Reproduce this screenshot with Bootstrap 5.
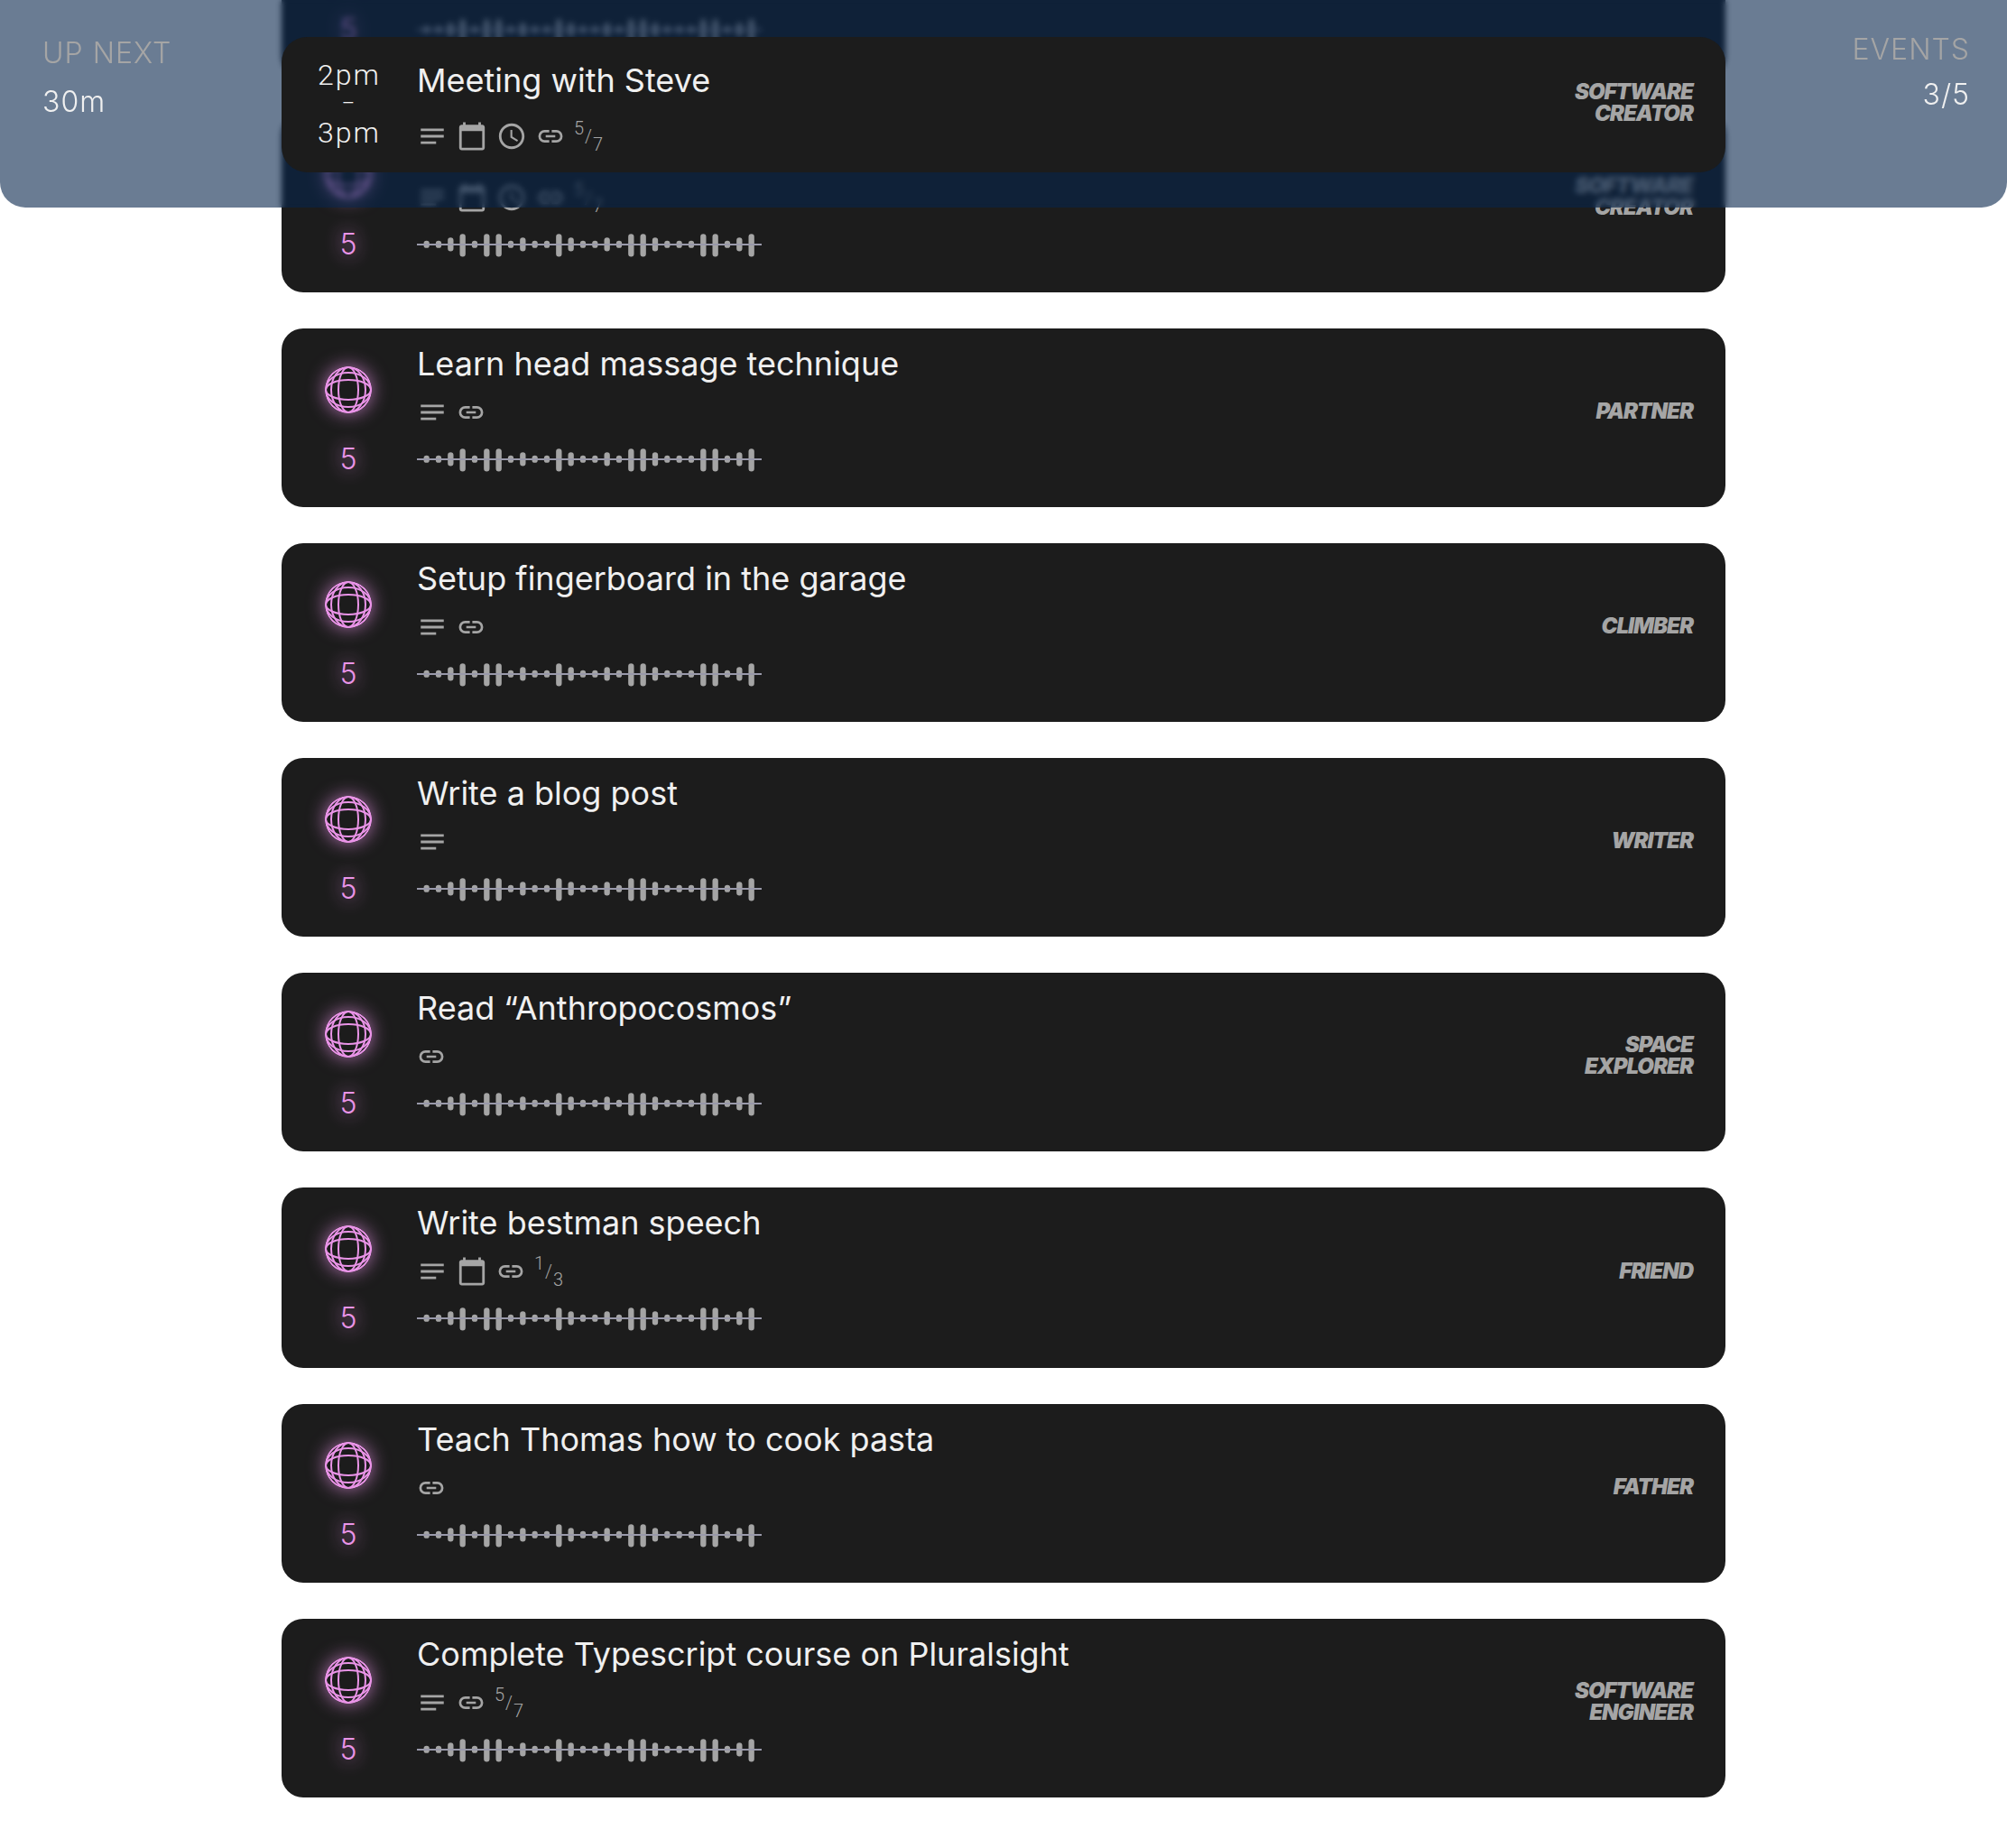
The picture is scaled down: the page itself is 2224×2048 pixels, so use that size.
<!DOCTYPE html>
<html lang="en">
<head>
<meta charset="utf-8">
<meta name="viewport" content="width=device-width, initial-scale=1">
<title>Tasks</title>
<link rel="stylesheet" href="https://cdn.jsdelivr.net/npm/bootstrap@5.3.0/dist/css/bootstrap.min.css">
<style>
body{font-family:Inter,"Liberation Sans",sans-serif;background:#fff;color:#f0f0f0;overflow-x:hidden}
.topbar{background:rgba(7,36,75,.6);-webkit-backdrop-filter:blur(3px);backdrop-filter:blur(3px);border-radius:0 0 28px 28px;padding:41px 0 39px;display:grid;grid-template-columns:minmax(0,1fr) minmax(0,1600px) minmax(0,1fr)}
.side-note{font-size:32px;font-weight:300;letter-spacing:1px;white-space:nowrap}
.side-note dt{font-weight:300;color:#a5a5a5}
.side-note dd{margin:0}
.next-note{padding-left:47px;line-height:54px;margin-top:-9px}
.events-note{padding-right:41px;line-height:50px;margin-top:-11px}
.tile{background:#1c1c1c;border:0;border-radius:24px;color:#f0f0f0;padding:17px 36px 32px 30px;min-height:198px}
.tile-tall{min-height:200px}
.tile-event{border-radius:28px;padding-top:26px;padding-bottom:23px;min-height:0}
.tile-event .marks{margin-top:23px}
.task-list{max-width:1600px;margin-top:-112px;padding-bottom:56px;gap:40px}
.lead-col{width:88px;flex:none}
.tile-title{font-size:36px;line-height:44px;min-height:44px;font-weight:400;margin:0}
.tile-tag{font-size:24px;line-height:24px;font-weight:900;font-style:italic;letter-spacing:-1px;color:#a5a5a5;text-transform:uppercase;width:160px}
.clock-text{font-family:Roboto,"Liberation Sans",sans-serif;font-size:32px;line-height:32px;font-weight:300;letter-spacing:2px;padding-left:2px}
.clock-text .dash{font-size:22px}
.marks{height:34px;gap:10px;color:#a5a5a5}
.marks svg{width:34px;height:34px;flex:none}
.marks .ico-link{width:32px}
.level{color:#ea94e8;font-size:32px;line-height:40px;font-weight:300;text-shadow:0 0 20px #ea94e8}
.globe{width:52px;height:52px;border-radius:50%;box-shadow:0 0 20px rgba(234,148,232,.7);color:#ea94e8}
.ratio-text{font-family:Roboto,"Liberation Sans",sans-serif;font-size:20px;line-height:16px;height:34px;font-weight:300;gap:1px}
.wave{width:382px;height:28px}
.task-list .globe{margin-top:25px}
.task-list .level{margin-top:31px}
.task-list .marks{margin:15px 0 21px}
</style>
<script src="https://cdn.jsdelivr.net/npm/bootstrap@5.3.0/dist/js/bootstrap.bundle.min.js"></script>
</head>
<body>
<svg width="0" height="0" class="position-absolute" aria-hidden="true">
<symbol id="notes" viewBox="0 0 24 24"><path fill="currentColor" d="M3 18h12v-2H3v2zM3 6v2h18V6H3zm0 7h18v-2H3v2z"/></symbol>
<symbol id="calendar" viewBox="0 0 24 24"><path fill="currentColor" d="M20 3h-1V1h-2v2H7V1H5v2H4c-1.100 0-2 .9-2 2v16c0 1.100.9 2 2 2h16c1.100 0 2-.9 2-2V5c0-1.100-.9-2-2-2zm0 18H4V8h16v13z"/></symbol>
<symbol id="clock" viewBox="0 0 24 24"><path fill="currentColor" d="M11.990 2C6.470 2 2 6.480 2 12s4.470 10 9.990 10C17.520 22 22 17.520 22 12S17.520 2 11.990 2zM12 20c-4.420 0-8-3.580-8-8s3.580-8 8-8 8 3.580 8 8-3.580 8-8 8zm.5-13H11v6l5.250 3.150.75-1.230-4.500-2.670z"/></symbol>
<symbol id="link" viewBox="0 0 32 34"><path fill="none" stroke="currentColor" stroke-width="2.700" d="M14.600 11.400H9.500a5.600 5.600 0 0 0 0 11.200h5.100M17.400 11.400h5.100a5.600 5.600 0 0 1 0 11.200h-5.100M10.700 17h10.600"/></symbol>
<symbol id="globe" viewBox="0 0 52 52"><g fill="none" stroke="currentColor" stroke-width="2"><circle cx="26" cy="26" r="25"/><ellipse cx="26" cy="26" rx="11" ry="25"/><ellipse cx="26" cy="26" rx="19" ry="25"/><ellipse cx="26" cy="26" rx="25" ry="11"/><ellipse cx="26" cy="26" rx="25" ry="19"/></g></symbol>
<symbol id="wave" viewBox="0 0 1146 84"><g fill="none" stroke="#a5a5a5" stroke-width="19" stroke-linecap="round"><path d="M32 39v5M72 39v5M192 39v5M312 39v5M392 39v5M432 39v5M552 39v5M592 39v5M672 39v5M832 39v5M872 39v5M912 39v5M1032 39v5"/><path d="M112 28v27M352 28v27M512 28v27M632 28v27M792 28v27M1072 28v27"/><path d="M152 16v57M232 16v57M272 16v57M472 16v57M712 16v57M752 16v57M952 16v57M992 16v57M1112 16v57"/></g><path stroke="#9999aa" stroke-width="6" d="M0 42h1146"/></symbol>
</svg>

<header class="topbar fixed-top">
  <dl class="side-note next-note mb-0"><dt>UP NEXT</dt><dd>30m</dd></dl>
  <article class="tile tile-event card flex-row align-items-center">
    <div class="lead-col text-center clock-text align-self-start"><div>2pm</div><div class="dash">–</div><div>3pm</div></div>
    <div class="flex-grow-1 ms-4 ps-2">
      <h2 class="tile-title">Meeting with Steve</h2>
      <div class="marks d-flex align-items-center"><svg><use href="#notes"/></svg><svg><use href="#calendar"/></svg><svg><use href="#clock"/></svg><svg class="ico-link"><use href="#link"/></svg><div class="ratio-text d-flex"><span class="align-self-start">5</span><span class="align-self-center">/</span><span class="align-self-end">7</span></div></div>
    </div>
    <div class="tile-tag text-end mb-2">Software Creator</div>
  </article>
  <dl class="side-note events-note mb-0 text-end"><dt>EVENTS</dt><dd>3/5</dd></dl>
</header>

<main class="task-list container-fluid px-0 d-grid" id="tasks"></main>

<template id="task">
  <article class="tile card flex-row align-items-center">
    <div class="lead-col d-flex flex-column align-items-center align-self-start"><svg class="globe"><use href="#globe"/></svg><div class="level">5</div></div>
    <div class="flex-grow-1 ms-4 ps-2 align-self-start">
      <h2 class="tile-title"></h2>
      <div class="marks d-flex align-items-center"></div>
      <svg class="wave d-block"><use href="#wave"/></svg>
    </div>
    <div class="tile-tag text-end"></div>
  </article>
</template>
<script>
const tasks=[
 ["",["notes"],"",""],
 ["",["notes","calendar","clock","link"],"5/7","Software Creator"],
 ["Learn head massage technique",["notes","link"],"","Partner"],
 ["Setup fingerboard in the garage",["notes","link"],"","Climber"],
 ["Write a blog post",["notes"],"","Writer"],
 ["Read “Anthropocosmos”",["link"],"","Space Explorer"],
 ["Write bestman speech",["notes","calendar","link"],"1/3","Friend","tile-tall"],
 ["Teach Thomas how to cook pasta",["link"],"","Father"],
 ["Complete Typescript course on Pluralsight",["notes","link"],"5/7","Software Engineer"]];
const tpl=document.getElementById("task");
for(const [title,icons,ratio,tag,size] of tasks){
  const n=tpl.content.cloneNode(true);
  if(size)n.querySelector(".tile").classList.add(size);
  n.querySelector(".tile-title").textContent=title;
  n.querySelector(".tile-tag").textContent=tag;
  let h=icons.map(i=>`<svg class="ico-${i}"><use href="#${i}"/></svg>`).join("");
  if(ratio){const [a,b]=ratio.split("/");h+=`<div class="ratio-text d-flex"><span class="align-self-start">${a}</span><span class="align-self-center">/</span><span class="align-self-end">${b}</span></div>`}
  n.querySelector(".marks").innerHTML=h;
  document.getElementById("tasks").append(n);
}
</script>
</body>
</html>
